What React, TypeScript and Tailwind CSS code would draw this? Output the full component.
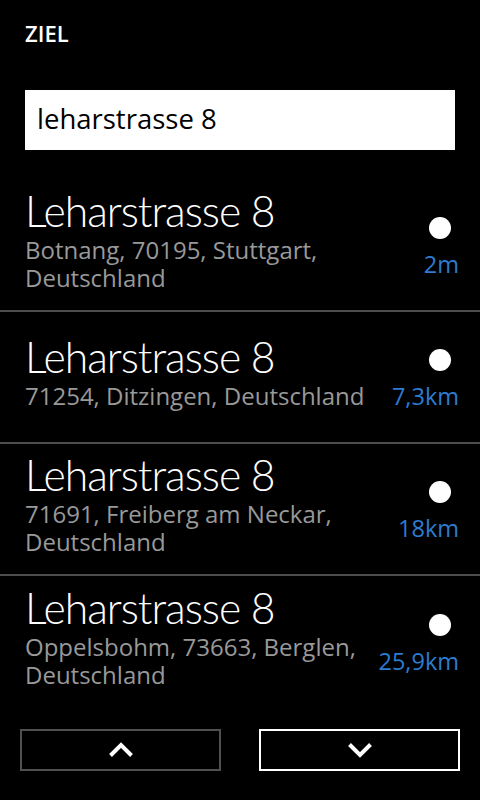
import React from "react";

type Item = { lines: string[]; dist: string };

const items: Item[] = [
  { lines: ["Botnang, 70195, Stuttgart,", "Deutschland"], dist: "2m" },
  { lines: ["71254, Ditzingen, Deutschland"], dist: "7,3km" },
  { lines: ["71691, Freiberg am Neckar,", "Deutschland"], dist: "18km" },
  { lines: ["Oppelsbohm, 73663, Berglen,", "Deutschland"], dist: "25,9km" },
];

function Chevron({ up }: { up: boolean }) {
  return (
    <svg width="26" height="16" viewBox="0 0 26 16" fill="none">
      <polyline
        points={up ? "2.5,13.5 13,3 23.5,13.5" : "2.5,2.5 13,13 23.5,2.5"}
        stroke="white"
        strokeWidth="4"
        strokeLinecap="butt"
        strokeLinejoin="miter"
      />
    </svg>
  );
}

export default function App() {
  return (
    <div
      className="w-[480px] h-[800px] bg-black text-white flex flex-col overflow-hidden"
      style={{ fontFamily: '"Open Sans", "Noto Sans", sans-serif' }}
    >
      <div className="pl-[25px] pt-[22px] text-[22px] leading-[22px] font-semibold">ZIEL</div>

      <div className="mx-[25px] mt-[46px] h-[60px] bg-white flex items-center pl-[12px] pb-[3px]">
        <span className="text-black text-[27.5px] leading-[30px]">leharstrasse 8</span>
      </div>

      <div className="mt-[30px] flex flex-col">
        {items.map((it, i) => (
          <div
            key={i}
            className={
              "h-[132px] flex items-center pl-[25px] pr-[21px] " +
              (i < items.length - 1 ? "border-b-2 border-[#4d4d4d]" : "")
            }
          >
            <div className="flex-1 flex flex-col mb-[12px]">
              <div
                className="text-[42.667px] leading-[50px] font-light tracking-[-1px] whitespace-nowrap"
                style={{ fontFamily: 'Lato, "Open Sans", sans-serif' }}
              >
                Leharstrasse 8
              </div>
              <div className="text-[24px] leading-[28px] text-[#999999] whitespace-nowrap">
                {it.lines.map((l, j) => (
                  <React.Fragment key={j}>
                    {j > 0 && <br />}
                    {l}
                  </React.Fragment>
                ))}
              </div>
            </div>
            <div className="flex flex-col items-end mt-[5px]">
              <div className="w-[22px] h-[22px] rounded-full bg-white mr-[8px]" />
              <div className="mt-[11px] text-[23.5px] leading-[28px] text-[#2b7cd3] whitespace-nowrap">
                {it.dist}
              </div>
            </div>
          </div>
        ))}
      </div>

      <div className="mt-[21px] flex px-[20px] gap-[38px]">
        <div className="flex-1 h-[42px] border-2 border-[#505050] flex items-center justify-center">
          <Chevron up />
        </div>
        <div className="flex-1 h-[42px] border-2 border-white flex items-center justify-center">
          <Chevron up={false} />
        </div>
      </div>
    </div>
  );
}
